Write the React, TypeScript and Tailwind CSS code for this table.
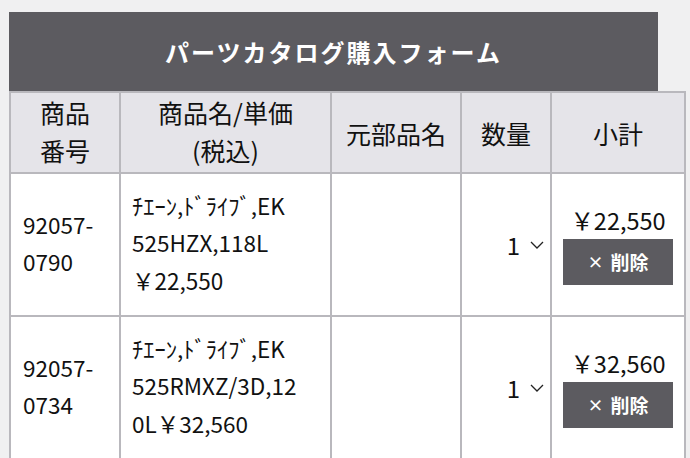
import React from "react";

const rows = [
  { no: ["92057-", "0790"], name: ["ﾁｴｰﾝ,ﾄﾞﾗｲﾌﾞ,EK", "525HZX,118L", "￥22,550"], sub: "￥22,550" },
  { no: ["92057-", "0734"], name: ["ﾁｴｰﾝ,ﾄﾞﾗｲﾌﾞ,EK", "525RMXZ/3D,12", "0L￥32,560"], sub: "￥32,560" },
];

function Chevron() {
  return (
    <svg width="14" height="8" viewBox="0 0 14 8" fill="none" className="ml-[10px] mt-[1px]">
      <path d="M1 1l6 6 6-6" stroke="#222" strokeWidth="1.3" />
    </svg>
  );
}

export default function App() {
  const font = { fontFamily: '"Noto Sans CJK JP", "Noto Sans", sans-serif' };
  return (
    <div className="min-h-[458px] w-[690px] overflow-hidden bg-[#f0f0f1] pt-[12px] pl-[9px]" style={font}>
      <div className="flex h-[79px] w-[649px] items-center justify-center bg-[#5c5b60] text-[24px] font-bold tracking-[2px] text-white">
        パーツカタログ購入フォーム
      </div>
      <table className="w-[677px] table-fixed border-collapse text-[#111]">
        <colgroup>
          <col className="w-[110px]" />
          <col className="w-[211px]" />
          <col className="w-[130px]" />
          <col className="w-[90px]" />
          <col className="w-[134px]" />
        </colgroup>
        <thead>
          <tr className="h-[81px] bg-[#e5e4e9] text-[25px] leading-[38px]">
            <th className="border-2 border-[#b9b8bd] px-1 pb-[3px] font-normal">商品<br />番号</th>
            <th className="border-2 border-[#b9b8bd] px-1 pb-[3px] font-normal">商品名/単価<br />(税込)</th>
            <th className="border-2 border-[#b9b8bd] px-1 font-normal">元部品名</th>
            <th className="border-2 border-[#b9b8bd] px-1 font-normal">数量</th>
            <th className="border-2 border-[#b9b8bd] px-1 font-normal">小計</th>
          </tr>
        </thead>
        <tbody>
          {rows.map((r) => (
            <tr key={r.no[1]} className="h-[143px] bg-white text-[22.5px] leading-[37.5px]">
              <td className="border-2 border-[#b9b8bd] pl-[12px] pr-1 pb-[3px]">
                {r.no.map((l) => (
                  <div key={l}>{l}</div>
                ))}
              </td>
              <td className="border-2 border-[#b9b8bd] pl-[11px] pr-1 pb-[3px] whitespace-nowrap">
                {r.name.map((l) => (
                  <div key={l}>{l}</div>
                ))}
              </td>
              <td className="border-2 border-[#b9b8bd]"></td>
              <td className="border-2 border-[#b9b8bd] pr-[6px]">
                <div className="flex items-center justify-end">
                  <span className="text-[24px]">1</span>
                  <Chevron />
                </div>
              </td>
              <td className="border-2 border-[#b9b8bd] px-[11px] text-center">
                <div className="text-[23.5px] leading-[32px]">{r.sub}</div>
                <button className="mt-[3px] flex h-[46px] w-[110px] items-center justify-center bg-[#5c5b60] text-[19px] font-bold text-white">
                  <span className="mr-[7px] text-[16px] font-bold">×</span>削除
                </button>
              </td>
            </tr>
          ))}
        </tbody>
      </table>
    </div>
  );
}
